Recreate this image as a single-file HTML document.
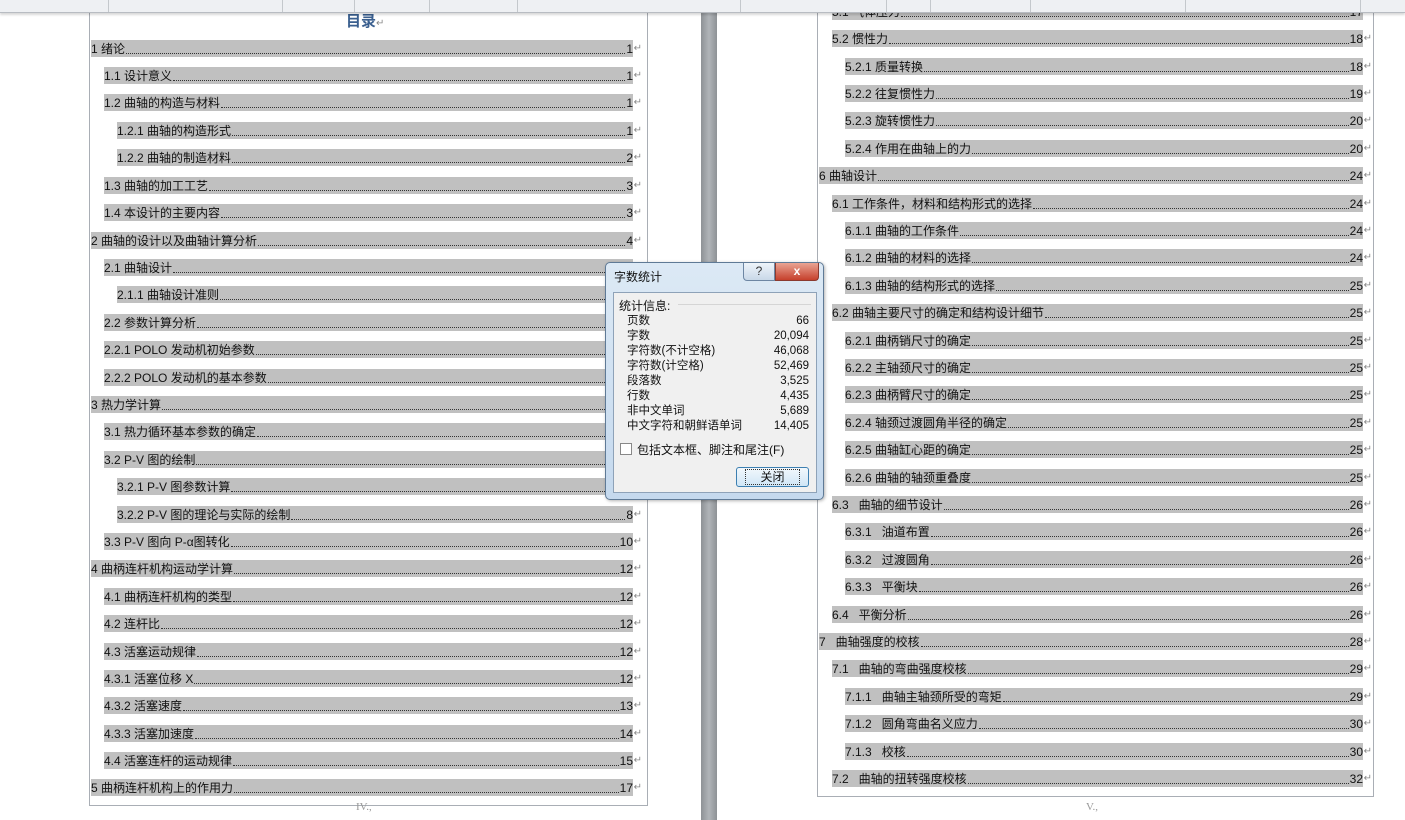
<!DOCTYPE html>
<html><head><meta charset="utf-8"><style>
*{margin:0;padding:0;box-sizing:border-box}
body{width:1405px;height:820px;overflow:hidden;background:#fff;position:relative;font-family:"Liberation Sans","Noto Sans CJK SC",sans-serif;font-size:12px;color:#111}
.top{position:absolute;left:0;top:0;width:1405px;height:13px;background:#eef0f3;border-bottom:1px solid #b8bcc2;box-shadow:0 2px 2px rgba(0,0,0,.15);z-index:5}
.top i{position:absolute;top:0;height:12px;border-left:1px solid #c4c8cc}
.vbar{position:absolute;left:701px;top:0;width:16px;height:820px;background:linear-gradient(90deg,#8e9296,#b0b4b8,#8e9296)}
.page{position:absolute;border:1px solid #a9aeb5;border-top:none;background:#fff}
.r{position:absolute;height:17px;background:#c0c0c0;display:flex;align-items:flex-end;line-height:15px;white-space:nowrap;font-family:"Liberation Sans","Noto Sans CJK SC",sans-serif;font-size:12px}
.r .d{flex:1;border-bottom:1px dotted #333;margin:0 1px 3px}
.r b{font-weight:normal;position:absolute;right:-9px;bottom:1px;color:#888;font-size:10px}
.ft{position:absolute;color:#999;font-size:11px;font-family:"Liberation Serif",serif}
.dlg{position:absolute;left:605px;top:262px;width:219px;height:238px;background:linear-gradient(#dce9f5,#c5d9ee);border:1px solid #5f7a96;border-radius:5px;z-index:6;box-shadow:1px 1px 3px rgba(0,0,0,.3)}
.dlg .in{position:absolute;left:7px;top:29px;width:204px;height:201px;background:#f0f0f0;border:1px solid #8ea2b8}
.dlg table{position:absolute;left:13px;top:21px;border-collapse:collapse;font-size:11.5px;line-height:15px;white-space:nowrap}
.dlg td{padding:0}
</style></head><body>
<div class="top"><i style="left:108px"></i><i style="left:282px"></i><i style="left:354px"></i><i style="left:429px"></i><i style="left:517px"></i><i style="left:740px"></i><i style="left:886px"></i><i style="left:930px"></i><i style="left:1030px"></i><i style="left:1185px"></i><i style="left:1360px"></i></div>
<div class="vbar"></div>
<div class="page" style="left:89px;top:0;width:559px;height:806px"></div>
<div class="page" style="left:817px;top:0;width:557px;height:797px"></div>
<div style="position:absolute;left:346px;top:10px;font-size:15px;color:#3a5f8f;font-weight:bold;font-family:'Noto Sans CJK SC',sans-serif">目录<span style="font-size:10px;color:#888;font-weight:normal">↵</span></div>
<div class="ft" style="left:356px;top:801px">IV.,</div>
<div class="ft" style="left:1086px;top:801px">V.,</div>

<div class="r" style="top:40px;left:91px;width:542px">1 绪论<span class="d"></span>1<b>↵</b></div>
<div class="r" style="top:67px;left:104px;width:529px">1.1 设计意义<span class="d"></span>1<b>↵</b></div>
<div class="r" style="top:94px;left:104px;width:529px">1.2 曲轴的构造与材料<span class="d"></span>1<b>↵</b></div>
<div class="r" style="top:122px;left:117px;width:516px">1.2.1 曲轴的构造形式<span class="d"></span>1<b>↵</b></div>
<div class="r" style="top:149px;left:117px;width:516px">1.2.2 曲轴的制造材料<span class="d"></span>2<b>↵</b></div>
<div class="r" style="top:177px;left:104px;width:529px">1.3 曲轴的加工工艺<span class="d"></span>3<b>↵</b></div>
<div class="r" style="top:204px;left:104px;width:529px">1.4 本设计的主要内容<span class="d"></span>3<b>↵</b></div>
<div class="r" style="top:232px;left:91px;width:542px">2 曲轴的设计以及曲轴计算分析<span class="d"></span>4<b>↵</b></div>
<div class="r" style="top:259px;left:104px;width:529px">2.1 曲轴设计<span class="d"></span>4<b>↵</b></div>
<div class="r" style="top:286px;left:117px;width:516px">2.1.1 曲轴设计准则<span class="d"></span>4<b>↵</b></div>
<div class="r" style="top:314px;left:104px;width:529px">2.2 参数计算分析<span class="d"></span>5<b>↵</b></div>
<div class="r" style="top:341px;left:104px;width:529px">2.2.1 POLO 发动机初始参数<span class="d"></span>5<b>↵</b></div>
<div class="r" style="top:369px;left:104px;width:529px">2.2.2 POLO 发动机的基本参数<span class="d"></span>5<b>↵</b></div>
<div class="r" style="top:396px;left:91px;width:542px">3 热力学计算<span class="d"></span>6<b>↵</b></div>
<div class="r" style="top:423px;left:104px;width:529px">3.1 热力循环基本参数的确定<span class="d"></span>6<b>↵</b></div>
<div class="r" style="top:451px;left:104px;width:529px">3.2 P-V 图的绘制<span class="d"></span>7<b>↵</b></div>
<div class="r" style="top:478px;left:117px;width:516px">3.2.1 P-V 图参数计算<span class="d"></span>7<b>↵</b></div>
<div class="r" style="top:506px;left:117px;width:516px">3.2.2 P-V 图的理论与实际的绘制<span class="d"></span>8<b>↵</b></div>
<div class="r" style="top:533px;left:104px;width:529px">3.3 P-V 图向 P-α图转化<span class="d"></span>10<b>↵</b></div>
<div class="r" style="top:560px;left:91px;width:542px">4 曲柄连杆机构运动学计算<span class="d"></span>12<b>↵</b></div>
<div class="r" style="top:588px;left:104px;width:529px">4.1 曲柄连杆机构的类型<span class="d"></span>12<b>↵</b></div>
<div class="r" style="top:615px;left:104px;width:529px">4.2 连杆比<span class="d"></span>12<b>↵</b></div>
<div class="r" style="top:643px;left:104px;width:529px">4.3 活塞运动规律<span class="d"></span>12<b>↵</b></div>
<div class="r" style="top:670px;left:104px;width:529px">4.3.1 活塞位移 X<span class="d"></span>12<b>↵</b></div>
<div class="r" style="top:697px;left:104px;width:529px">4.3.2 活塞速度<span class="d"></span>13<b>↵</b></div>
<div class="r" style="top:725px;left:104px;width:529px">4.3.3 活塞加速度<span class="d"></span>14<b>↵</b></div>
<div class="r" style="top:752px;left:104px;width:529px">4.4 活塞连杆的运动规律<span class="d"></span>15<b>↵</b></div>
<div class="r" style="top:779px;left:91px;width:542px">5 曲柄连杆机构上的作用力<span class="d"></span>17<b>↵</b></div>

<div class="r" style="top:3px;left:832px;width:531px">5.1 气体压力<span class="d"></span>17<b>↵</b></div>
<div class="r" style="top:30px;left:832px;width:531px">5.2 惯性力<span class="d"></span>18<b>↵</b></div>
<div class="r" style="top:58px;left:845px;width:518px">5.2.1 质量转换<span class="d"></span>18<b>↵</b></div>
<div class="r" style="top:85px;left:845px;width:518px">5.2.2 往复惯性力<span class="d"></span>19<b>↵</b></div>
<div class="r" style="top:112px;left:845px;width:518px">5.2.3 旋转惯性力<span class="d"></span>20<b>↵</b></div>
<div class="r" style="top:140px;left:845px;width:518px">5.2.4 作用在曲轴上的力<span class="d"></span>20<b>↵</b></div>
<div class="r" style="top:167px;left:819px;width:544px">6 曲轴设计<span class="d"></span>24<b>↵</b></div>
<div class="r" style="top:195px;left:832px;width:531px">6.1 工作条件，材料和结构形式的选择<span class="d"></span>24<b>↵</b></div>
<div class="r" style="top:222px;left:845px;width:518px">6.1.1 曲轴的工作条件<span class="d"></span>24<b>↵</b></div>
<div class="r" style="top:249px;left:845px;width:518px">6.1.2 曲轴的材料的选择<span class="d"></span>24<b>↵</b></div>
<div class="r" style="top:277px;left:845px;width:518px">6.1.3 曲轴的结构形式的选择<span class="d"></span>25<b>↵</b></div>
<div class="r" style="top:304px;left:832px;width:531px">6.2 曲轴主要尺寸的确定和结构设计细节<span class="d"></span>25<b>↵</b></div>
<div class="r" style="top:332px;left:845px;width:518px">6.2.1 曲柄销尺寸的确定<span class="d"></span>25<b>↵</b></div>
<div class="r" style="top:359px;left:845px;width:518px">6.2.2 主轴颈尺寸的确定<span class="d"></span>25<b>↵</b></div>
<div class="r" style="top:386px;left:845px;width:518px">6.2.3 曲柄臂尺寸的确定<span class="d"></span>25<b>↵</b></div>
<div class="r" style="top:414px;left:845px;width:518px">6.2.4 轴颈过渡圆角半径的确定<span class="d"></span>25<b>↵</b></div>
<div class="r" style="top:441px;left:845px;width:518px">6.2.5 曲轴缸心距的确定<span class="d"></span>25<b>↵</b></div>
<div class="r" style="top:469px;left:845px;width:518px">6.2.6 曲轴的轴颈重叠度<span class="d"></span>25<b>↵</b></div>
<div class="r" style="top:496px;left:832px;width:531px">6.3&nbsp;&nbsp; 曲轴的细节设计<span class="d"></span>26<b>↵</b></div>
<div class="r" style="top:523px;left:845px;width:518px">6.3.1&nbsp;&nbsp; 油道布置<span class="d"></span>26<b>↵</b></div>
<div class="r" style="top:551px;left:845px;width:518px">6.3.2&nbsp;&nbsp; 过渡圆角<span class="d"></span>26<b>↵</b></div>
<div class="r" style="top:578px;left:845px;width:518px">6.3.3&nbsp;&nbsp; 平衡块<span class="d"></span>26<b>↵</b></div>
<div class="r" style="top:606px;left:832px;width:531px">6.4&nbsp;&nbsp; 平衡分析<span class="d"></span>26<b>↵</b></div>
<div class="r" style="top:633px;left:819px;width:544px">7&nbsp;&nbsp; 曲轴强度的校核<span class="d"></span>28<b>↵</b></div>
<div class="r" style="top:660px;left:832px;width:531px">7.1&nbsp;&nbsp; 曲轴的弯曲强度校核<span class="d"></span>29<b>↵</b></div>
<div class="r" style="top:688px;left:845px;width:518px">7.1.1&nbsp;&nbsp; 曲轴主轴颈所受的弯矩<span class="d"></span>29<b>↵</b></div>
<div class="r" style="top:715px;left:845px;width:518px">7.1.2&nbsp;&nbsp; 圆角弯曲名义应力<span class="d"></span>30<b>↵</b></div>
<div class="r" style="top:743px;left:845px;width:518px">7.1.3&nbsp;&nbsp; 校核<span class="d"></span>30<b>↵</b></div>
<div class="r" style="top:770px;left:832px;width:531px">7.2&nbsp;&nbsp; 曲轴的扭转强度校核<span class="d"></span>32<b>↵</b></div>

<div class="dlg">
 <div style="position:absolute;left:8px;top:5px;font-size:12px">字数统计</div>
 <div style="position:absolute;left:137px;top:0;width:32px;height:18px;border:1px solid #6d86a3;border-top:none;border-radius:0 0 0 4px;background:linear-gradient(#eef4fa,#c9d8e8);text-align:center;font-size:12px;line-height:17px;color:#333">?</div>
 <div style="position:absolute;left:169px;top:0;width:44px;height:18px;border:1px solid #8b3a2f;border-top:none;border-radius:0 0 4px 0;background:linear-gradient(#e9a493,#c6402c);text-align:center;color:#fff;font-weight:bold;font-size:12px;line-height:17px">x</div>
 <div class="in">
  <div style="position:absolute;left:5px;top:4px;font-size:12px">统计信息:</div>
  <div style="position:absolute;left:64px;top:11px;width:133px;border-top:1px solid #d5d5d5"></div>
  <table>
   <tr><td style="width:130px">页数</td><td style="width:52px;text-align:right">66</td></tr>
   <tr><td>字数</td><td style="text-align:right">20,094</td></tr>
   <tr><td>字符数(不计空格)</td><td style="text-align:right">46,068</td></tr>
   <tr><td>字符数(计空格)</td><td style="text-align:right">52,469</td></tr>
   <tr><td>段落数</td><td style="text-align:right">3,525</td></tr>
   <tr><td>行数</td><td style="text-align:right">4,435</td></tr>
   <tr><td>非中文单词</td><td style="text-align:right">5,689</td></tr>
   <tr><td>中文字符和朝鲜语单词</td><td style="text-align:right">14,405</td></tr>
  </table>
  <div style="position:absolute;left:6px;top:150px;width:12px;height:12px;border:1px solid #888;background:#fff"></div>
  <div style="position:absolute;left:23px;top:148px;font-size:12px">包括文本框、脚注和尾注(F)</div>
  <div style="position:absolute;left:122px;top:174px;width:73px;height:20px;border:1px solid #3c7fb1;border-radius:3px;background:linear-gradient(#f2f8fc,#cfe6f6);text-align:center;line-height:18px;font-size:12px"><span style="border:1px dotted #333;padding:0 14px">关闭</span></div>
 </div>
</div>
</body></html>
